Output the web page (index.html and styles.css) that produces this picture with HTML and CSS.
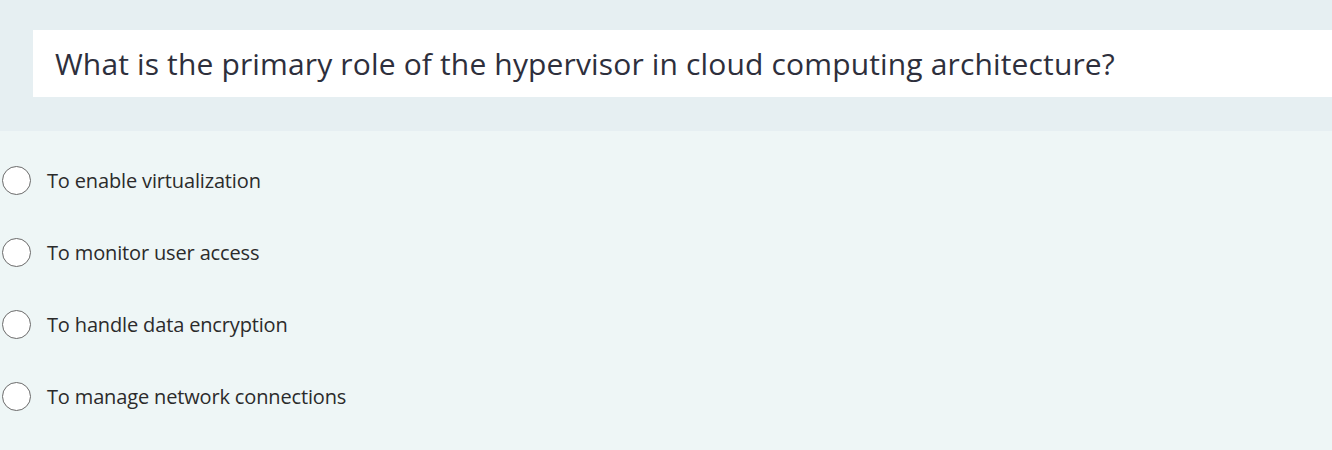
FILE: index.html
```html
<!DOCTYPE html>
<html>
<head>
<meta charset="utf-8">
<link rel="stylesheet" href="styles.css">
</head>
<body>
<div class="page">
  <header class="q-band">
    <div class="q-box">
      <h1 class="q-text">What is the primary role of the hypervisor in cloud computing architecture?</h1>
    </div>
  </header>
  <ul class="options">
    <li class="option"><span class="radio"></span><span class="label">To enable virtualization</span></li>
    <li class="option"><span class="radio"></span><span class="label">To monitor user access</span></li>
    <li class="option"><span class="radio"></span><span class="label">To handle data encryption</span></li>
    <li class="option"><span class="radio"></span><span class="label">To manage network connections</span></li>
  </ul>
</div>
</body>
</html>
```
FILE: styles.css
```css
html, body {
  margin: 0;
  padding: 0;
  background: #eef6f6;
  font-family: "Open Sans", "Noto Sans", sans-serif;
}
.page {
  width: 1332px;
  height: 450px;
  overflow: hidden;
}
.q-band {
  background: #e6eff2;
  height: 131px;
  padding-top: 30px;
  padding-left: 33px;
  box-sizing: border-box;
}
.q-box {
  background: #ffffff;
  height: 67px;
  display: flex;
  align-items: center;
  padding-left: 22px;
}
.q-text {
  margin: 0;
  font-weight: 400;
  font-size: 30px;
  color: #2e2f3c;
  letter-spacing: 0.15px;
}
.options {
  list-style: none;
  margin: 0;
  padding: 34px 0 0 2px;
  display: flex;
  flex-direction: column;
  gap: 42px;
}
.option {
  display: flex;
  align-items: center;
  height: 30px;
}
.radio {
  width: 27px;
  height: 27px;
  border: 1.5px solid #6a6a6a;
  border-radius: 50%;
  background: #ffffff;
  flex: none;
}
.label {
  margin-left: 16px;
  font-size: 20px;
  color: #2b2b2b;
  letter-spacing: -0.15px;
}
```
